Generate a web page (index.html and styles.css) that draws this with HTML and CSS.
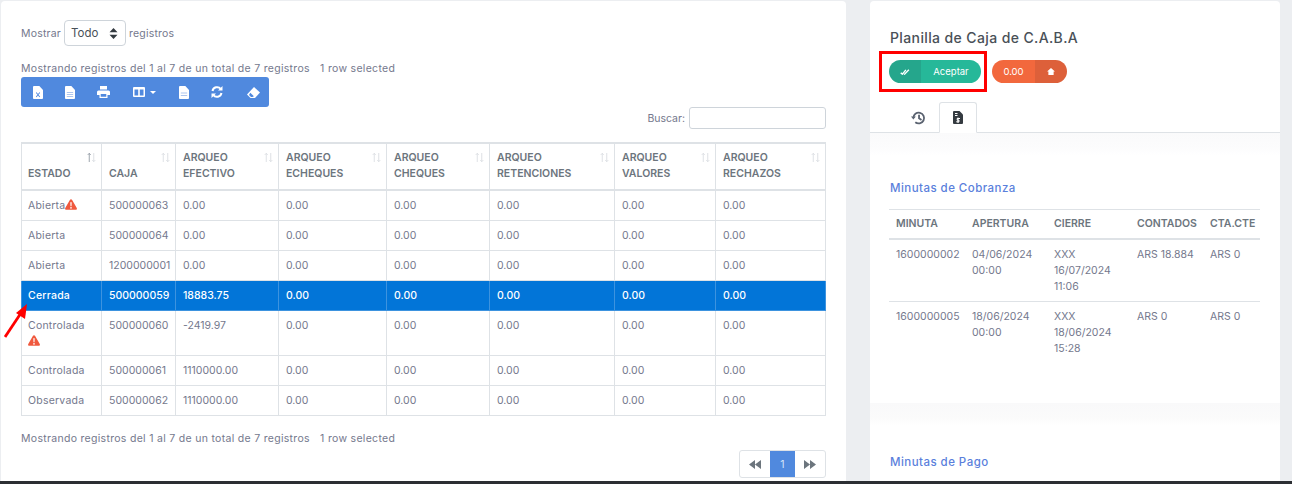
FILE: index.html
```html
<!DOCTYPE html>
<html lang="es">
<head>
<meta charset="utf-8">
<title>Planilla de Caja</title>
<link rel="stylesheet" href="styles.css">
</head>
<body>
<svg class="defs" width="0" height="0" aria-hidden="true">
  <defs>
    <symbol id="warn" viewBox="0 0 24 22"><path fill="#f0593e" d="M12 0.5c.9 0 1.6.5 2 1.2l9.500 16.500c.9 1.500-.2 3.300-2 3.300H2.500c-1.800 0-2.900-1.800-2-3.300L10 1.700C10.400 1 11.100.5 12 .5z"/><path fill="#fff" d="M10.600 6.500h2.800l-.4 8h-2zM12 16a1.700 1.700 0 1 1 0 3.400 1.700 1.700 0 0 1 0-3.400z"/></symbol>
    <symbol id="sort" viewBox="0 0 12 13"><path fill="none" stroke="currentColor" stroke-width="1" d="M3 12.500V1M1 3l2-2 2 2M9 .5V12M7 10l2 2 2-2"/></symbol>
    <symbol id="sort-on" viewBox="0 0 12 13"><path fill="none" stroke="#7d8791" stroke-width="1" d="M3 12.500V1M1 3l2-2 2 2"/><path fill="none" stroke="#d3d7dc" stroke-width="1" d="M9 .5V12M7 10l2 2 2-2"/></symbol>
  </defs>
</svg>
<main class="page">
  <section class="card left">
    <div class="length">
      <span>Mostrar</span>
      <span class="select">Todo<svg class="updown" width="9" height="11" viewBox="0 0 9 11"><path fill="#343a40" d="M4.500 0l4 4.300H.5zM4.500 11l-4-4.300h8z"/></svg></span>
      <span>registros</span>
    </div>
    <p class="info first">Mostrando registros del 1 al 7 de un total de 7 registros <span class="sel">1 row selected</span></p>
    <div class="tools">
      <svg class="t t1" width="10" height="13" viewBox="0 0 11 13" preserveAspectRatio="none"><path fill="#fff" d="M1 0h6l4 4v8a1 1 0 0 1-1 1H1a1 1 0 0 1-1-1V1a1 1 0 0 1 1-1z"/><path stroke="#5089de" stroke-width="1.100" d="M3.500 6.500l4 4.500M7.500 6.500l-4 4.500"/></svg>
      <svg class="t t2" width="10" height="13" viewBox="0 0 11 13" preserveAspectRatio="none"><path fill="#fff" d="M1 0h6l4 4v8a1 1 0 0 1-1 1H1a1 1 0 0 1-1-1V1a1 1 0 0 1 1-1z"/><path stroke="#a9c3ee" stroke-width="1" d="M2 6.500h7M2 8.500h7M2 10.500h7"/></svg>
      <svg class="t t3" width="13" height="12" viewBox="0 0 13 12"><path fill="#fff" d="M3 0h7v3.500H3zM1.500 4.500h10A1.500 1.500 0 0 1 13 6v3h-2.500v3h-8V9H0V6a1.500 1.500 0 0 1 1.500-1.500z"/><path fill="#5089de" d="M3.700 8h5.600v2.800H3.700z"/></svg>
      <span class="t t4"><svg width="12" height="10" viewBox="0 0 12 10"><path fill="#fff" d="M1 0h10a1 1 0 0 1 1 1v8a1 1 0 0 1-1 1H1a1 1 0 0 1-1-1V1a1 1 0 0 1 1-1z"/><path fill="#5089de" d="M1.500 2.500h3.700v6H1.500zM6.800 2.500h3.700v6H6.800z"/></svg><svg class="caret" width="6" height="3" viewBox="0 0 6 3"><path fill="#fff" d="M0 0h6L3 3z"/></svg></span>
      <svg class="t t5" width="10" height="13" viewBox="0 0 11 13" preserveAspectRatio="none"><path fill="#fff" d="M1 0h6l4 4v8a1 1 0 0 1-1 1H1a1 1 0 0 1-1-1V1a1 1 0 0 1 1-1z"/><path stroke="#a9c3ee" stroke-width="1" d="M2 7h7M2 9.500h7"/></svg>
      <svg class="t t6" width="12" height="12" viewBox="0 0 12 12"><path fill="none" stroke="#fff" stroke-width="2" d="M1.500 5A4.700 4.700 0 0 1 9.800 3M10.500 7A4.700 4.700 0 0 1 2.200 9"/><path fill="#fff" d="M11.500 0v4.500H7zM.5 12V7.500H5z"/></svg>
      <svg class="t t7" width="13" height="11" viewBox="0 0 13 11"><path fill="#fff" d="M7 0l6 5.500L8 11H3.500L0 7.500z"/><path fill="#5089de" d="M3.300 5.800l3.600 3.400L5.500 10H4L2 8z"/></svg>
    </div>
    <div class="search"><label>Buscar:</label><span class="input"></span></div>
    <table class="grid">
      <colgroup><col class="c1"><col class="c2"><col class="c3"><col class="c4"><col class="c5"><col class="c6"><col class="c7"><col class="c8"></colgroup>
      <thead>
        <tr>
          <th class="on">ESTADO<svg class="sort"><use href="#sort-on"/></svg></th>
          <th>CAJA<svg class="sort"><use href="#sort"/></svg></th>
          <th>ARQUEO<br>EFECTIVO<svg class="sort"><use href="#sort"/></svg></th>
          <th>ARQUEO<br>ECHEQUES<svg class="sort"><use href="#sort"/></svg></th>
          <th>ARQUEO<br>CHEQUES<svg class="sort"><use href="#sort"/></svg></th>
          <th>ARQUEO<br>RETENCIONES<svg class="sort"><use href="#sort"/></svg></th>
          <th>ARQUEO<br>VALORES<svg class="sort"><use href="#sort"/></svg></th>
          <th>ARQUEO<br>RECHAZOS<svg class="sort"><use href="#sort"/></svg></th>
        </tr>
      </thead>
      <tbody>
        <tr><td class="st">Abierta<svg class="warn"><use href="#warn"/></svg></td><td>500000063</td><td>0.00</td><td>0.00</td><td>0.00</td><td>0.00</td><td>0.00</td><td>0.00</td></tr>
        <tr><td class="st">Abierta</td><td>500000064</td><td>0.00</td><td>0.00</td><td>0.00</td><td>0.00</td><td>0.00</td><td>0.00</td></tr>
        <tr><td class="st">Abierta</td><td>1200000001</td><td>0.00</td><td>0.00</td><td>0.00</td><td>0.00</td><td>0.00</td><td>0.00</td></tr>
        <tr class="selected"><td class="st">Cerrada</td><td>500000059</td><td>18883.75</td><td>0.00</td><td>0.00</td><td>0.00</td><td>0.00</td><td>0.00</td></tr>
        <tr><td class="st">Controlada<svg class="warn solo"><use href="#warn"/></svg></td><td>500000060</td><td>-2419.97</td><td>0.00</td><td>0.00</td><td>0.00</td><td>0.00</td><td>0.00</td></tr>
        <tr><td class="st">Controlada</td><td>500000061</td><td>1110000.00</td><td>0.00</td><td>0.00</td><td>0.00</td><td>0.00</td><td>0.00</td></tr>
        <tr><td class="st">Observada</td><td>500000062</td><td>1110000.00</td><td>0.00</td><td>0.00</td><td>0.00</td><td>0.00</td><td>0.00</td></tr>
      </tbody>
    </table>
    <p class="info last">Mostrando registros del 1 al 7 de un total de 7 registros <span class="sel">1 row selected</span></p>
    <div class="pager">
      <span class="pg"><svg width="12" height="9" viewBox="0 0 12 9"><path fill="#6c757d" d="M6 0v9L0 4.500zM12 0v9L6 4.500z"/></svg></span>
      <span class="pg cur">1</span>
      <span class="pg"><svg width="12" height="9" viewBox="0 0 12 9"><path fill="#6c757d" d="M0 0v9l6-4.500zM6 0v9l6-4.500z"/></svg></span>
    </div>
    <svg class="arrow" width="26" height="36" viewBox="0 0 26 36"><path fill="none" stroke="#f00" stroke-width="2.800" d="M1 35L17 11"/><path fill="#f00" d="M23 2l-2 15-9-6z"/></svg>
  </section>

  <section class="card right">
    <h1>Planilla de Caja de C.A.B.A</h1>
    <div class="actions">
      <span class="pill green"><span class="seg icon"><svg width="10" height="6" viewBox="0 0 11 7"><path fill="none" stroke="#fff" stroke-width="1.600" d="M.5 4.500L2.500 6 6.500 1M4.500 5.500L5 6 10 1"/></svg></span><span class="seg label">Aceptar</span></span>
      <span class="pill orange"><span class="seg label">0.00</span><span class="seg icon"><svg width="8" height="7" viewBox="0 0 9 8"><path fill="#fff" d="M4.500 0L9 4H7.500v4h-6V4H0z"/></svg></span></span>
    </div>
    <div class="tabs">
      <span class="tab hist"><svg width="15" height="14" viewBox="0 0 14 13"><path fill="none" stroke="#5a6270" stroke-width="1.700" d="M2.200 6.500A5 5 0 1 1 4 10.400M7.500 3.500v3.300l2.300 1.500"/><path fill="#5a6270" d="M0 5h4.500L2.200 8z"/></svg></span>
      <span class="tab active"><svg width="10" height="13" viewBox="0 0 10 13"><path fill="#343a40" d="M1 0h5.500L10 3.500V12a1 1 0 0 1-1 1H1a1 1 0 0 1-1-1V1a1 1 0 0 1 1-1z"/><path stroke="#fff" stroke-width="1" fill="none" d="M2 2.500h2.500M2 4.500h2.500M5 6.500v5.500M7 7.500H4.200v1.700h1.800v1.600H3.200"/></svg></span>
    </div>
    <div class="band top"></div>
    <h2>Minutas de Cobranza</h2>
    <table class="mini">
      <colgroup><col class="m1"><col class="m2"><col class="m3"><col class="m4"><col class="m5"></colgroup>
      <thead><tr><th>MINUTA</th><th>APERTURA</th><th>CIERRE</th><th>CONTADOS</th><th>CTA.CTE</th></tr></thead>
      <tbody>
        <tr><td>1600000002</td><td>04/06/2024 00:00</td><td>XXX<br>16/07/2024 11:06</td><td>ARS 18.884</td><td>ARS 0</td></tr>
        <tr><td>1600000005</td><td>18/06/2024 00:00</td><td>XXX<br>18/06/2024 15:28</td><td>ARS 0</td><td>ARS 0</td></tr>
      </tbody>
    </table>
    <div class="band low"></div>
    <h2 class="second">Minutas de Pago</h2>
    <span class="redbox"></span>
  </section>
</main>
<footer class="bar"></footer>
</body>
</html>
```

FILE: styles.css
```css
* { box-sizing: border-box; }
html, body { height: 100%; }
body {
  margin: 0;
  background: #eceef1;
  font-family: "Inter", "Liberation Sans", sans-serif;
  font-size: 10.5px;
  color: #74788d;
  overflow: hidden;
  display: flex;
  flex-direction: column;
}
.defs { position: absolute; }
.page {
  flex: 1;
  min-height: 0;
  display: flex;
  gap: 24px;
  padding: 1px 12px 0 1px;
  overflow: hidden;
}
.bar { height: 3px; background: #2c2f33; flex: none; }
.card { background: #fff; border-radius: 4px 4px 0 0; position: relative; overflow: hidden; }
.left { width: 845px; flex: none; padding: 19px 20px 0 20px; display: flex; flex-direction: column; }
.left > * { flex: none; }
.right { flex: 1; padding-top: 28px; }

.length { display: flex; align-items: center; gap: 3px; height: 26px; letter-spacing: .2px; }
.select {
  width: 62px; height: 26px;
  border: 1px solid #ced4da; border-radius: 4px;
  padding: 0 7px 0 6px;
  display: flex; align-items: center; justify-content: space-between;
  font-size: 11.5px; color: #495057; letter-spacing: 0;
}
.info { margin: 0; line-height: 16px; letter-spacing: .3px; white-space: nowrap; }
.info.first { margin-top: 15px; }
.sel { margin-left: 7px; }
.tools {
  width: 248px; height: 30px;
  background: #5089de; border-radius: 3px;
  display: flex; align-items: center; position: relative;
  padding-left: 12px;
}
.t { flex: none; }
.t2 { margin-left: 22px; }
.t3 { margin-left: 22px; }
.t4 { margin-left: 23px; display: flex; align-items: center; gap: 5px; }
.t5 { margin-left: 23px; }
.t6 { margin-left: 22px; }
.t7 { margin-left: 24px; }

.search { display: flex; justify-content: flex-end; align-items: center; gap: 4px; height: 22px; }
.input { width: 137px; height: 22px; border: 1px solid #ced4da; border-radius: 3px; }
.grid {
  margin-top: 13px;
  width: 804px;
  table-layout: fixed;
  border-collapse: collapse;
  border: 1px solid #dee2e6;
  border-top-width: 2px;
}
.c1 { width: 80px; } .c2 { width: 74px; } .c3 { width: 103px; } .c4 { width: 108px; }
.c5 { width: 103px; } .c6 { width: 125px; } .c7 { width: 101px; } .c8 { width: 110px; }
.grid th {
  height: 45px;
  padding: 6px 7px 7px;
  border: 1px solid #dee2e6;
  border-bottom: 2px solid #dee2e6;
  text-align: left;
  vertical-align: bottom;
  font-weight: 600;
  font-size: 10.5px;
  line-height: 16px;
  color: #6c757d;
  position: relative;
}
.grid th.on { padding-left: 6px; }
.sort { position: absolute; top: 8px; right: 5px; width: 9px; height: 11px; color: #d3d7dc; }
.grid td {
  padding: 7px 7px 6px;
  border: 1px solid #dee2e6;
  line-height: 16px;
  vertical-align: top;
  white-space: nowrap;
}
.grid td.st { padding-left: 6px; letter-spacing: .22px; }
.selected td { background: #0275d8; color: #fff; font-weight: 500; border-color: #3d93df; }
.warn { width: 12px; height: 11px; vertical-align: -1px; }
.warn.solo { display: block; margin: 1px 0 3px; }
.info.last { margin-top: 15px; }
.pager {
  align-self: flex-end;
  display: flex; height: 28px; margin-top: 3px;
  border: 1px solid #dee2e6; border-radius: 3px;
}
.pg { width: 30px; display: flex; align-items: center; justify-content: center; }
.pg.cur { width: 25px; background: #5089de; color: #d5e5fa; }
.arrow { position: absolute; left: 3px; top: 301px; }

h1 {
  margin: 0 0 0 20px;
  font-size: 14px; line-height: 18px; font-weight: 500;
  color: #495057; letter-spacing: .38px;
}
.actions { display: flex; gap: 11px; margin: 13px 0 0 19px; }
.pill { display: flex; height: 23px; border-radius: 12px; overflow: hidden; color: #fff; font-size: 9.5px; }
.seg { display: flex; align-items: center; justify-content: center; height: 100%; }
.green .icon { width: 32px; background: #25a68c; }
.green .label { width: 60px; background: #26b899; }
.orange .label { width: 43px; background: #f2683d; }
.orange .icon { width: 32px; background: #dd603a; }
.tabs { display: flex; height: 31px; margin-top: 19px; border-bottom: 1px solid #dee2e6; padding-left: 29px; }
.tab { width: 40px; height: 31px; display: flex; align-items: center; justify-content: center; }
.tab.hist { padding-right: 2px; }
.tab.active { width: 38px; background: #fff; border: 1px solid #dee2e6; border-bottom-color: #fff; border-radius: 3px 3px 0 0; }
.band { height: 22px; background: linear-gradient(#fafafb, #fcfcfd 70%, #fff); }
.band.low { margin-top: 40px; background: linear-gradient(#f9f9fa, #fbfbfb 70%, #fff); }
h2 {
  margin: 25px 0 0 20px;
  font-size: 11.5px; line-height: 16px; font-weight: 500;
  color: #5b7fdc; letter-spacing: .45px;
}
.mini { margin: 13px 0 0 19px; width: 371px; table-layout: fixed; border-collapse: collapse; }
.m1 { width: 76px; } .m2 { width: 82px; } .m3 { width: 83px; } .m4 { width: 73px; } .m5 { width: 57px; }
.mini th {
  height: 29px; padding: 0 7px;
  text-align: left; font-size: 10.5px; font-weight: 600; color: #6c757d;
  border-top: 1px solid #dee2e6;
  border-bottom: 2px solid #dee2e6;
  white-space: nowrap;
}
.mini td {
  padding: 7px 7px 6px; line-height: 16px; vertical-align: top;
  border-bottom: 1px solid #dee2e6;
}
.mini tbody tr:last-child td { border-bottom: 0; }
h2.second { margin-top: 29px; }
.redbox {
  position: absolute; left: 9px; top: 50px;
  width: 108px; height: 41px;
  border: 3px solid #f00;
}
```
